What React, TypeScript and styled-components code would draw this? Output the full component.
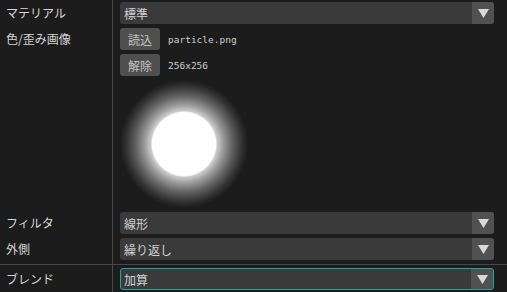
import React from 'react';
import styled, { createGlobalStyle } from 'styled-components';

const GlobalStyle = createGlobalStyle`
  html, body {
    margin: 0;
    padding: 0;
    background: #1c1c1c;
  }
  body {
    width: 507px;
    height: 292px;
    overflow: hidden;
    font-family: "Noto Sans CJK JP", "Noto Sans", sans-serif;
  }
`;

const Panel = styled.div`
  display: flex;
  flex-direction: column;
  width: 507px;
  height: 292px;
  background: #1c1c1c;
`;

const Section = styled.div<{ $top?: boolean }>`
  display: grid;
  grid-template-columns: 113px 1fr;
  border-top: ${props => (props.$top ? '1px solid #474747' : 'none')};
`;

const Label = styled.div<{ $pt: number; $pb: number }>`
  border-right: 1px solid #4b4b4b;
  padding: ${props => props.$pt}px 0 ${props => props.$pb}px 6px;
  font-size: 12px;
  line-height: 22px;
  color: #d6d6d6;
  white-space: nowrap;
`;

const Cell = styled.div<{ $pt: number; $pb: number }>`
  display: flex;
  flex-direction: column;
  gap: 4px;
  padding: ${props => props.$pt}px 13px ${props => props.$pb}px 7px;
`;

const Select = styled.div<{ $active?: boolean }>`
  display: flex;
  align-items: center;
  height: 22px;
  box-sizing: border-box;
  background: #3a3a3a;
  border-radius: 3px;
  border: ${props => (props.$active ? '1px solid #25a3a3' : 'none')};
  overflow: hidden;
`;

const SelectText = styled.span<{ $active?: boolean }>`
  flex: 1;
  padding-left: ${props => (props.$active ? 3 : 4)}px;
  font-size: 12px;
  color: #d2d2d2;
`;

const ArrowBox = styled.div`
  width: 22px;
  align-self: stretch;
  display: flex;
  align-items: center;
  justify-content: center;
  background: #515151;
`;

const FileRow = styled.div`
  display: flex;
  align-items: center;
  gap: 8px;
`;

const Button = styled.button`
  height: 22px;
  width: 40px;
  padding: 0;
  border: none;
  border-radius: 3px;
  background: #4f4f4f;
  color: #c4c4c4;
  font-family: "Noto Sans CJK JP", "Noto Sans", sans-serif;
  font-size: 12px;
`;

const FileText = styled.span`
  font-family: "DejaVu Sans Mono", monospace;
  font-size: 9.5px;
  color: #cfcfcf;
`;

const Preview = styled.div`
  width: 128px;
  height: 128px;
  background: radial-gradient(
    circle closest-side,
    #ffffff 0,
    #ffffff 49.5%,
    rgba(255, 255, 255, 0.78) 51.5%,
    rgba(255, 255, 255, 0.55) 62%,
    rgba(255, 255, 255, 0.3) 76%,
    rgba(255, 255, 255, 0.1) 90%,
    rgba(255, 255, 255, 0) 100%
  );
`;

const Arrow = () => (
  <svg width="11" height="9" viewBox="0 0 11 9">
    <polygon points="0,0 11,0 5.5,9" fill="#d9d9d9" />
  </svg>
);

const Dropdown: React.FC<{ value: string; active?: boolean }> = ({ value, active }) => (
  <Select $active={active}>
    <SelectText $active={active}>{value}</SelectText>
    <ArrowBox>
      <Arrow />
    </ArrowBox>
  </Select>
);

export default function App() {
  return (
    <>
      <GlobalStyle />
      <Panel>
        <Section>
          <Label $pt={2} $pb={2}>マテリアル</Label>
          <Cell $pt={2} $pb={2}>
            <Dropdown value="標準" />
          </Cell>

          <Label $pt={2} $pb={2}>色/歪み画像</Label>
          <Cell $pt={2} $pb={2}>
            <FileRow>
              <Button>読込</Button>
              <FileText>particle.png</FileText>
            </FileRow>
            <FileRow>
              <Button>解除</Button>
              <FileText>256x256</FileText>
            </FileRow>
            <Preview />
          </Cell>

          <Label $pt={2} $pb={2}>フィルタ</Label>
          <Cell $pt={2} $pb={2}>
            <Dropdown value="線形" />
          </Cell>

          <Label $pt={2} $pb={4}>外側</Label>
          <Cell $pt={2} $pb={4}>
            <Dropdown value="繰り返し" />
          </Cell>
        </Section>

        <Section $top>
          <Label $pt={3} $pb={2}>ブレンド</Label>
          <Cell $pt={3} $pb={2}>
            <Dropdown value="加算" active />
          </Cell>
        </Section>
      </Panel>
    </>
  );
}
